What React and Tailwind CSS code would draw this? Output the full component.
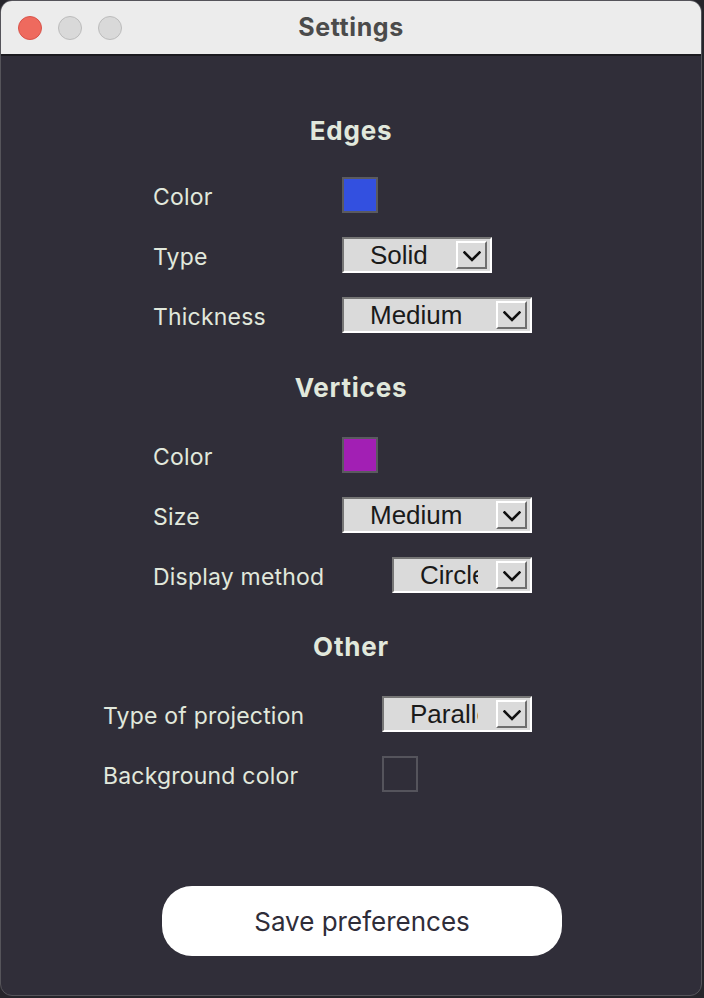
import React from "react";

const labelFont = { fontFamily: "Inter, 'Noto Sans', sans-serif" };
const selFont = { fontFamily: "'Liberation Sans', Arial, sans-serif" };

function Chevron() {
  return (
    <svg width="18" height="11" viewBox="0 0 18 11" fill="none">
      <path d="M1.5 1.5 L9 9 L16.5 1.5" stroke="#111" strokeWidth="2.6" strokeLinecap="square" />
    </svg>
  );
}

function Select({ value, w }) {
  return (
    <div
      className={`flex h-[36px] items-center border-2 border-t-[#767676] border-l-[#767676] border-b-white border-r-white bg-[#dadada] pl-[26px] pr-[3px] ${w}`}
    >
      <span
        className="mr-[18px] min-w-0 flex-1 overflow-hidden whitespace-nowrap text-[26px] leading-[30px] text-[#1a1a1a]"
        style={selFont}
      >
        {value}
      </span>
      <div className="flex h-[28px] w-[31px] shrink-0 items-center justify-center border-2 border-t-white border-l-white border-b-[#6e6e6e] border-r-[#6e6e6e] bg-[#dadada] pt-[3px]">
        <Chevron />
      </div>
    </div>
  );
}

function Swatch({ color }) {
  return <div className={`h-[36px] w-[36px] border-2 ${color}`} />;
}

function Row({ label, labelW, children }) {
  return (
    <div className="flex h-[36px] items-center">
      <div
        className={`${labelW} shrink-0 pt-[4px] text-[23px] leading-none tracking-[0.2px] text-[#e1e8dc]`}
        style={labelFont}
      >
        {label}
      </div>
      {children}
    </div>
  );
}

function Heading({ children }) {
  return (
    <div
      className="flex h-[32px] items-center justify-center text-[26px] font-bold leading-none tracking-[0.8px] text-[#e1e8dc]"
      style={labelFont}
    >
      {children}
    </div>
  );
}

export default function App() {
  return (
    <div className="h-[998px] w-[704px] overflow-hidden bg-[#26252b]">
      <div className="flex h-[996px] w-[702px] flex-col overflow-hidden rounded-[12px] border border-[#55545a] bg-[#302e39]">
        <div className="relative flex h-[55px] shrink-0 items-center justify-center border-b-2 border-[#1b1a1f] bg-[#ececec]">
          <div className="absolute left-[17px] top-[15px] flex gap-[16px]">
            <div className="h-[24px] w-[24px] rounded-full border border-[#d9534a] bg-[#ee6a5e]" />
            <div className="h-[24px] w-[24px] rounded-full border border-[#bcbcbc] bg-[#d9d9d9]" />
            <div className="h-[24px] w-[24px] rounded-full border border-[#bcbcbc] bg-[#d9d9d9]" />
          </div>
          <div className="text-[25px] font-bold tracking-[0.6px] text-[#4b4b4b]" style={labelFont}>
            Settings
          </div>
        </div>

        <div className="flex flex-col pt-[59px]">
          <Heading>Edges</Heading>
          <div className="mt-[30px] flex flex-col gap-[24px] pl-[152px]">
            <Row label="Color" labelW="w-[189px]">
              <Swatch color="border-[#5a5a5f] bg-[#3350e0]" />
            </Row>
            <Row label="Type" labelW="w-[189px]">
              <Select value="Solid" w="w-[150px]" />
            </Row>
            <Row label="Thickness" labelW="w-[189px]">
              <Select value="Medium" w="w-[190px]" />
            </Row>
          </div>

          <div className="mt-[39px]">
            <Heading>Vertices</Heading>
          </div>
          <div className="mt-[33px] flex flex-col gap-[24px] pl-[152px]">
            <Row label="Color" labelW="w-[189px]">
              <Swatch color="border-[#5a5a5f] bg-[#a21fb4]" />
            </Row>
            <Row label="Size" labelW="w-[189px]">
              <Select value="Medium" w="w-[190px]" />
            </Row>
            <Row label="Display method" labelW="w-[239px]">
              <Select value="Circle" w="w-[140px]" />
            </Row>
          </div>

          <div className="mt-[38px]">
            <Heading>Other</Heading>
          </div>
          <div className="mt-[33px] flex flex-col gap-[24px] pl-[102px]">
            <Row label="Type of projection" labelW="w-[279px]">
              <Select value="Parallel" w="w-[150px]" />
            </Row>
            <Row label="Background color" labelW="w-[279px]">
              <Swatch color="border-[#55545c] bg-transparent" />
            </Row>
          </div>

          <div className="mt-[94px] pl-[161px]">
            <button
              className="flex h-[70px] w-[400px] items-center justify-center rounded-[30px] bg-white text-[26px] text-[#2f2d39]"
              style={labelFont}
            >
              Save preferences
            </button>
          </div>
        </div>
      </div>
    </div>
  );
}
